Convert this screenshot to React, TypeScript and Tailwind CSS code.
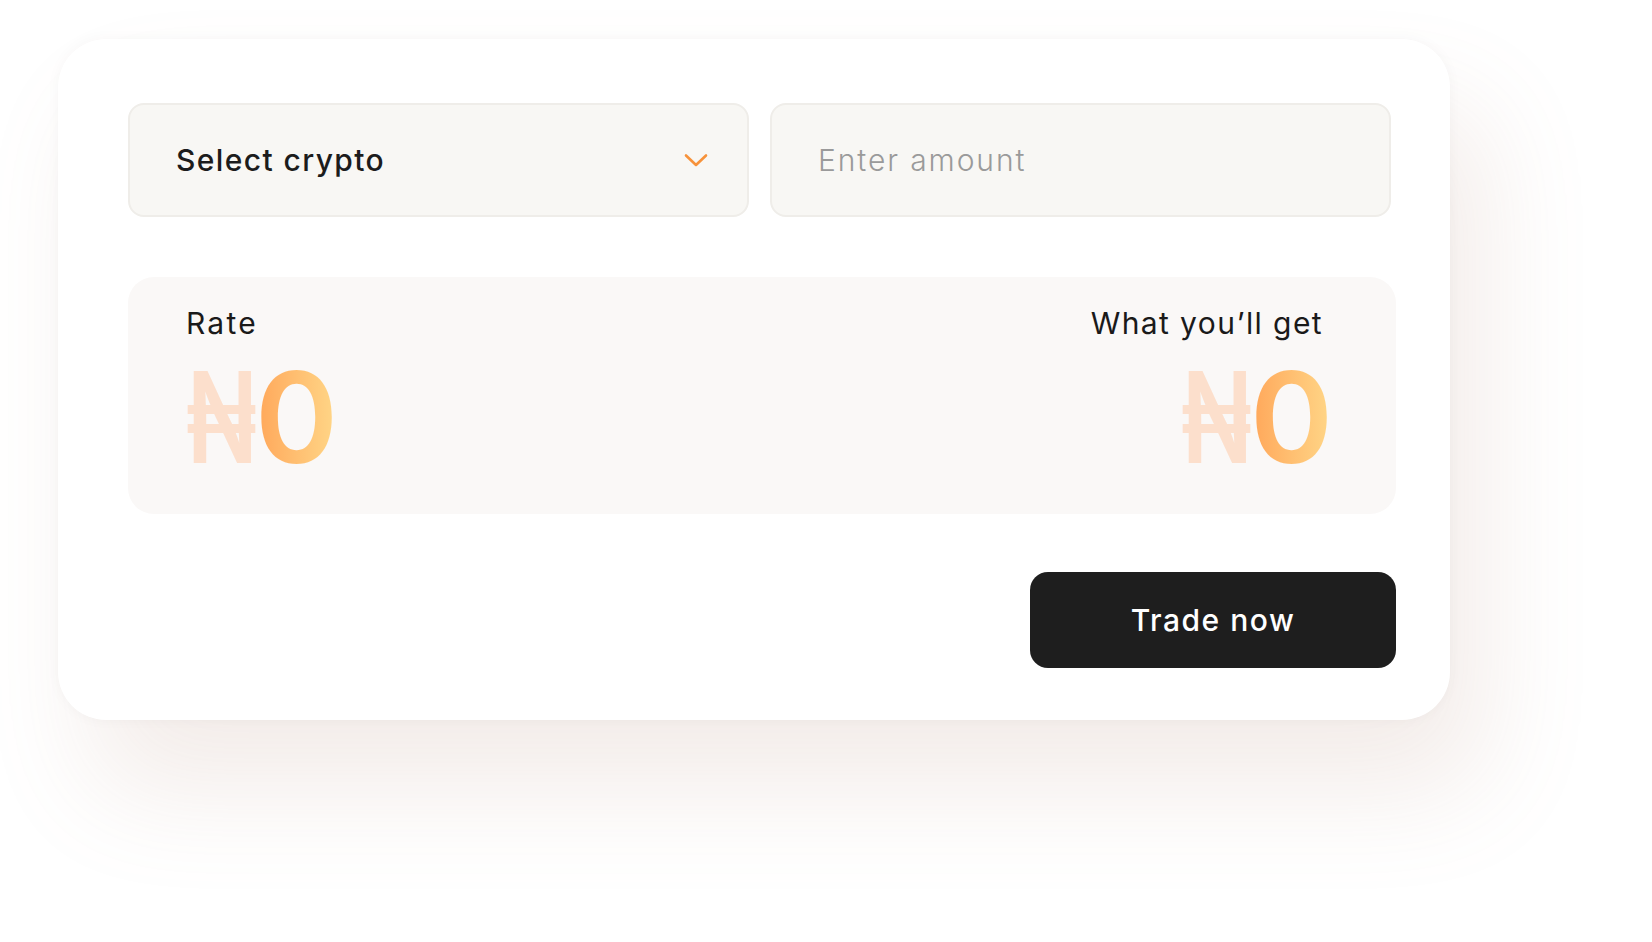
import React from "react";

function Amount() {
  return (
    <div className="mt-[13px] flex text-[126px] font-semibold leading-[126px] tracking-[-2px]">
      <span className="mr-[-25px] inline-block origin-left scale-x-[0.74] text-[#fcdfcc]">₦</span>
      <span className="bg-linear-to-r from-[#ffa659] to-[#ffd687] bg-clip-text text-transparent">0</span>
    </div>
  );
}

export default function App() {
  return (
    <div className="min-h-[942px] w-[1652px] bg-white pl-[58px] pt-[39px] overflow-hidden" style={{ fontFamily: "Inter, 'Noto Sans', sans-serif" }}>
      <div className="flex h-[681px] w-[1392px] flex-col rounded-[48px] bg-white pl-[70px] pr-[54px] pt-[64px] shadow-[34px_70px_110px_rgba(170,120,100,0.14),0_0_14px_rgba(0,0,0,0.035)]">
        <div className="flex gap-[21px]">
          <button className="flex h-[114px] w-[621px] items-center justify-between rounded-[16px] border-2 border-[#efede9] bg-[#f8f7f4] pl-[46px] pr-[39px]">
            <span className="text-[30px] font-medium tracking-[1.4px] text-[#1c1c1c]">Select crypto</span>
            <svg width="24" height="15" viewBox="0 0 24 15" fill="none">
              <path d="M2 2.5L12 12L22 2.5" stroke="#f7923a" strokeWidth="2.6" strokeLinecap="round" strokeLinejoin="round" />
            </svg>
          </button>
          <div className="flex h-[114px] w-[621px] items-center rounded-[16px] border-2 border-[#efede9] bg-[#f8f7f4] pl-[46px] pr-[40px]">
            <input
              placeholder="Enter amount"
              className="w-full bg-transparent text-[30px] font-light tracking-[1.9px] text-[#1c1c1c] outline-none placeholder:text-[#9a9a9a]"
            />
          </div>
        </div>

        <div className="mt-[60px] flex h-[237px] justify-between rounded-[26px] bg-[#faf8f7] pl-[58px] pr-[65px] pt-[28px]">
          <div className="flex flex-col">
            <span className="text-[30px] leading-[36px] tracking-[2.2px] text-[#1a1a1a]">Rate</span>
            <Amount />
          </div>
          <div className="flex flex-col items-end">
            <span className="mr-[8px] text-[30px] leading-[36px] tracking-[1.4px] text-[#1a1a1a]">What you’ll get</span>
            <Amount />
          </div>
        </div>

        <div className="mt-[58px] flex justify-end">
          <button className="flex h-[96px] w-[366px] items-center justify-center rounded-[18px] bg-[#1e1e1e] text-[30px] font-medium tracking-[1.5px] text-white">
            Trade now
          </button>
        </div>
      </div>
    </div>
  );
}
